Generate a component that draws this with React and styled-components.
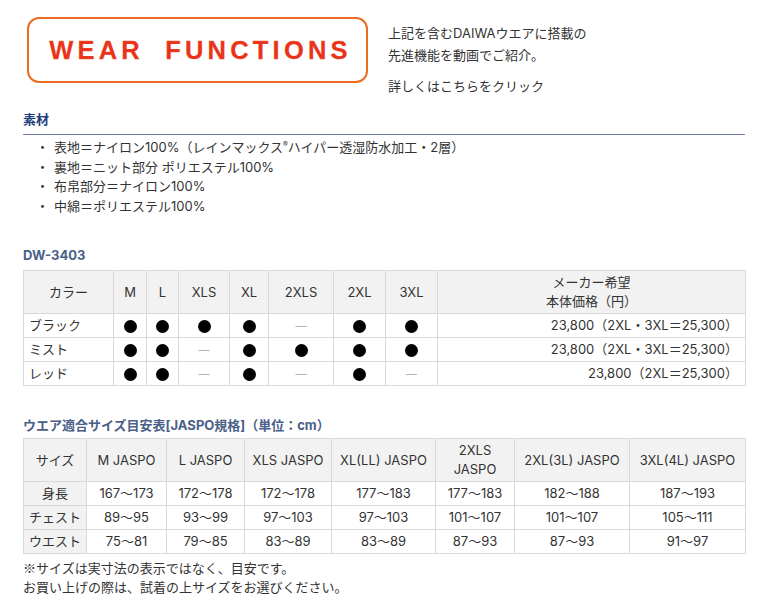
import React from 'react';
import styled, { createGlobalStyle } from 'styled-components';

const GlobalStyle = createGlobalStyle`
  body {
    margin: 0;
    background: #fff;
    color: #333;
    font-family: Inter, "Noto Sans CJK JP", sans-serif;
    font-size: 13px;
  }
`;

const Page = styled.div`
  width: 722px;
  padding: 0 15px 20px 23px;
`;

const Top = styled.div`
  box-sizing: border-box;
  display: flex;
  align-items: flex-start;
  padding-top: 17px;
  height: 110px;
`;

const Banner = styled.a`
  box-sizing: border-box;
  width: 341px;
  height: 66px;
  margin-left: 4px;
  border: 2.5px solid #ec6b1e;
  border-radius: 12px;
  display: flex;
  align-items: center;
  justify-content: center;
  padding-left: 6px;
  color: #e8321c;
  font-family: "Liberation Sans", Arial, sans-serif;
  font-weight: bold;
  font-size: 25.5px;
  letter-spacing: 4.2px;
  word-spacing: 10px;
  text-decoration: none;
  -webkit-text-stroke: 0.3px #f0582a;
`;

const Intro = styled.div`
  margin-left: 20px;
  padding-top: 5px;
  line-height: 22px;
`;

const IntroLink = styled.p`
  margin: 9px 0 0;
`;

const Heading = styled.h3`
  margin: ${p => p.$top}px 0 0;
  padding-bottom: ${p => (p.$rule ? 5 : 0)}px;
  border-bottom: ${p => (p.$rule ? '1px solid #6c7ea3' : 'none')};
  font-size: 13px;
  line-height: 19px;
  font-weight: bold;
  color: ${p => p.$color};
`;

const List = styled.ul`
  list-style: none;
  margin: 0;
  padding: 0 0 0 13px;
`;

const Item = styled.li`
  line-height: 19.5px;
  &::before {
    content: "・";
    display: inline-block;
    width: 18px;
  }
`;

const Table = styled.table`
  width: 722px;
  margin-top: ${p => p.$top}px;
  border-collapse: collapse;
  table-layout: fixed;
  font-size: 13px;
`;

const Col = styled.col`
  width: ${p => p.$w}px;
`;

const Th = styled.th`
  height: 42px;
  padding: 0 2px;
  border: 1px solid #d9d9d9;
  background: #f2f2f2;
  font-weight: normal;
  line-height: 19px;
  text-align: center;
`;

const Td = styled.td`
  height: 23px;
  padding: 0 ${p => (p.$align === 'right' ? 7 : 5)}px 0 5px;
  border: 1px solid #d9d9d9;
  background: ${p => (p.$shade ? '#f2f2f2' : '#fff')};
  text-align: ${p => p.$align || 'center'};
  line-height: 19px;
  white-space: nowrap;
`;

const Dot = styled.span`
  display: inline-block;
  width: 13px;
  height: 13px;
  border-radius: 50%;
  background: #000;
  vertical-align: middle;
`;

const Dash = styled.span`
  color: #777;
  font-family: "Noto Sans CJK JP", sans-serif;
`;

const Cjk = styled.span`
  font-family: "Noto Sans CJK JP", sans-serif;
`;

const Note = styled.p`
  margin: ${p => p.$top}px 0 0;
  line-height: 19px;
`;

const sizes = ['M', 'L', 'XLS', 'XL', '2XLS', '2XL', '3XL'];

const colors = [
  { name: 'ブラック', stock: [1, 1, 1, 1, 0, 1, 1], price: '23,800（2XL・3XL＝25,300）' },
  { name: 'ミスト', stock: [1, 1, 0, 1, 1, 1, 1], price: '23,800（2XL・3XL＝25,300）' },
  { name: 'レッド', stock: [1, 1, 0, 1, 0, 1, 0], price: '23,800（2XL＝25,300）' },
];

const jaspoCols = ['M JASPO', 'L JASPO', 'XLS JASPO', 'XL(LL) JASPO', '2XLS\nJASPO', '2XL(3L) JASPO', '3XL(4L) JASPO'];

const jaspoRows = [
  { name: '身長', vals: ['167〜173', '172〜178', '172〜178', '177〜183', '177〜183', '182〜188', '187〜193'] },
  { name: 'チェスト', vals: ['89〜95', '93〜99', '97〜103', '97〜103', '101〜107', '101〜107', '105〜111'] },
  { name: 'ウエスト', vals: ['75〜81', '79〜85', '83〜89', '83〜89', '87〜93', '87〜93', '91〜97'] },
];

export default function App() {
  return (
    <Page>
      <GlobalStyle />
      <Top>
        <Banner href="#">WEAR FUNCTIONS</Banner>
        <Intro>
          上記を含むDAIWAウエアに搭載の<br />
          先進機能を動画でご紹介。
          <IntroLink>詳しくはこちらをクリック</IntroLink>
        </Intro>
      </Top>

      <Heading $top={0} $rule $color="#1f3d7a">素材</Heading>
      <List>
        <Item>表地＝ナイロン100%（レインマックス<sup style={{ fontSize: 7 }}>®</sup>ハイパー透湿防水加工・2層）</Item>
        <Item>裏地＝ニット部分 ポリエステル100%</Item>
        <Item>布帛部分＝ナイロン100%</Item>
        <Item>中綿＝ポリエステル100%</Item>
      </List>

      <Heading $top={30} $color="#4b6088">DW-3403</Heading>
      <Table $top={5}>
        <colgroup>
          {[90, 33, 32, 51, 39, 65, 52, 52, 308].map((w, i) => <Col key={i} $w={w} />)}
        </colgroup>
        <thead>
          <tr>
            <Th>カラー</Th>
            {sizes.map(s => <Th key={s}>{s}</Th>)}
            <Th>メーカー希望<br />本体価格（円）</Th>
          </tr>
        </thead>
        <tbody>
          {colors.map(c => (
            <tr key={c.name}>
              <Td $align="left">{c.name}</Td>
              {c.stock.map((v, i) => (
                <Td key={i}>{v ? <Dot /> : <Dash>―</Dash>}</Td>
              ))}
              <Td $align="right">{c.price}</Td>
            </tr>
          ))}
        </tbody>
      </Table>

      <Heading $top={30} $color="#4b6088">ウエア適合サイズ目安表[JASPO規格]（単位：cm）</Heading>
      <Table $top={3}>
        <colgroup>
          {[63, 80, 78, 87, 104, 79, 115, 116].map((w, i) => <Col key={i} $w={w} />)}
        </colgroup>
        <thead>
          <tr>
            <Th>サイズ</Th>
            {jaspoCols.map(s => (
              <Th key={s}>
                {s.split('\n').map((part, i) => (
                  <React.Fragment key={i}>{i > 0 && <br />}{part}</React.Fragment>
                ))}
              </Th>
            ))}
          </tr>
        </thead>
        <tbody>
          {jaspoRows.map(r => (
            <tr key={r.name}>
              <Td $shade>{r.name}</Td>
              {r.vals.map((v, i) => <Td key={i}>{v}</Td>)}
            </tr>
          ))}
        </tbody>
      </Table>

      <Note $top={4}><Cjk>※</Cjk>サイズは実寸法の表示ではなく、目安です。</Note>
      <Note $top={0}>お買い上げの際は、試着の上サイズをお選びください。</Note>
    </Page>
  );
}
